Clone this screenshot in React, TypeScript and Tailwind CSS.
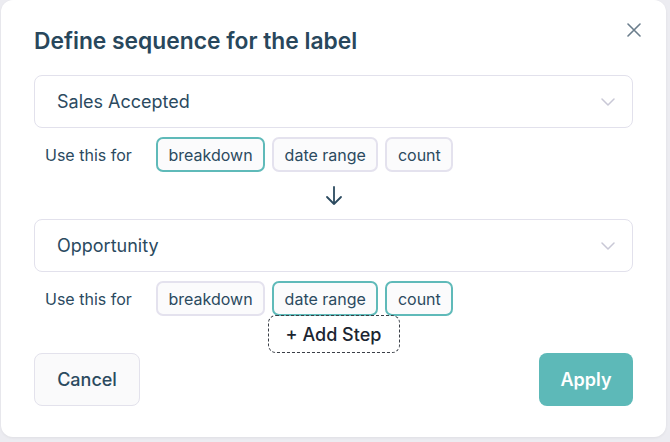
import React from "react";

const font = { fontFamily: "Inter, 'Noto Sans', sans-serif" };

function Chevron() {
  return (
    <svg width="14" height="8" viewBox="0 0 14 8" fill="none">
      <path d="M1 1l6 6 6-6" stroke="#c9c8d6" strokeWidth="1.5" strokeLinecap="round" strokeLinejoin="round" />
    </svg>
  );
}

function Select({ label }: { label: string }) {
  return (
    <div className="flex h-[53px] items-center justify-between rounded-[8px] border border-[#e2e1ec] bg-white pl-[22px] pr-[17px]">
      <span className="text-[18px] text-[#2b4a5f]">{label}</span>
      <Chevron />
    </div>
  );
}

function Chip({ label, active }: { label: string; active?: boolean }) {
  return (
    <div
      className={
        "flex h-[35px] items-center rounded-[7px] border-2 bg-[#fbfbfc] px-[10.5px] text-[16px] text-[#2b4a5f] " +
        (active ? "border-[#5fbab9]" : "border-[#e4e2ee]")
      }
    >
      {label}
    </div>
  );
}

function UseRow({ active }: { active: string[] }) {
  return (
    <div className="flex items-center pl-[11px]">
      <span className="w-[111px] text-[16px] text-[#2b4a5f]">Use this for</span>
      <div className="flex gap-[7px]">
        {["breakdown", "date range", "count"].map((c) => (
          <Chip key={c} label={c} active={active.includes(c)} />
        ))}
      </div>
    </div>
  );
}

export default function App() {
  return (
    <div className="h-[442px] w-[670px] overflow-hidden bg-[#ececf1]" style={font}>
      <div className="ml-px h-[437px] w-[665px] rounded-[12px] bg-white px-[33px] shadow-[0_1px_3px_rgba(0,0,0,0.06)]">
        <div className="flex items-start justify-between pt-[27px]">
          <h1 className="text-[22.8px] font-semibold leading-[28px] text-[#28475c]">Define sequence for the label</h1>
          <svg className="mr-[-8px] mt-[-4px]" width="14" height="14" viewBox="0 0 14 14" fill="none">
            <path d="M1 1l12 12M13 1L1 13" stroke="#6a7d8c" strokeWidth="1.6" strokeLinecap="round" />
          </svg>
        </div>
        <div className="mt-[20px]">
          <Select label="Sales Accepted" />
        </div>
        <div className="mt-[9px]">
          <UseRow active={["breakdown"]} />
        </div>
        <div className="mt-[14px] flex justify-center">
          <svg width="18" height="20" viewBox="0 0 18 20" fill="none">
            <path d="M9 1v17M2 11l7 7 7-7" stroke="#2b4a5f" strokeWidth="1.8" strokeLinecap="round" strokeLinejoin="round" />
          </svg>
        </div>
        <div className="mt-[13px]">
          <Select label="Opportunity" />
        </div>
        <div className="mt-[9px]">
          <UseRow active={["date range", "count"]} />
        </div>
        <div className="mt-[-1px] flex justify-center">
          <div className="flex h-[38px] w-[132px] items-center justify-center rounded-[8px] border border-dashed border-[#3a3f47] text-[18px] font-medium text-[#1b2531]">
            + Add Step
          </div>
        </div>
        <div className="flex items-center justify-between">
          <button className="h-[53px] w-[106px] rounded-[8px] border border-[#e3e2ec] bg-[#fafafb] text-[18px] font-medium text-[#2b4a5f]">
            Cancel
          </button>
          <button className="h-[53px] w-[94px] rounded-[8px] bg-[#5db9b8] text-[18px] font-semibold text-white">
            Apply
          </button>
        </div>
      </div>
    </div>
  );
}
